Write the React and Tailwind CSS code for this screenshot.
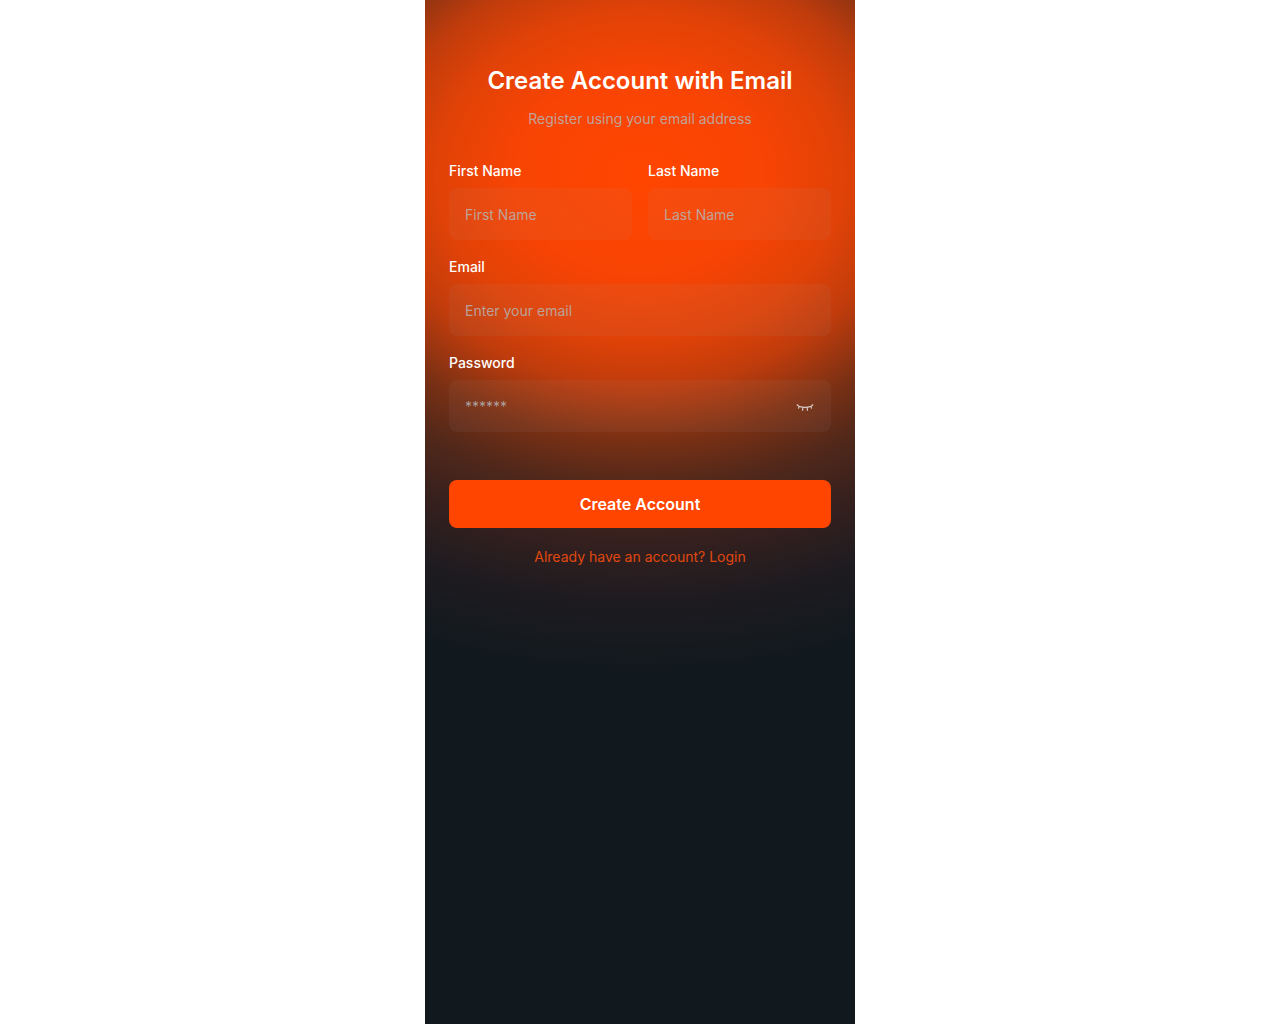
import React from 'react';

const Field = ({ label, placeholder }) => (
  <div className="flex flex-col gap-[7px]">
    <label className="text-sm leading-[20px] font-medium text-white">{label}</label>
    <input
      placeholder={placeholder}
      className="w-full h-[52px] px-4 rounded-lg bg-[#a7a7a7]/[0.07] text-sm text-white placeholder:text-[#b4b4b4]/85 outline-none"
    />
  </div>
);

const ClosedEye = () => (
  <svg width="18" height="10" viewBox="0 0 18 10" fill="none" stroke="#d8ccc6" strokeWidth="1.200">
    <path d="M.8 1.600L3 3.200C5 4.100 7 4.400 9 4.400s4-.3 6-1.200l2.200-1.600" />
    <path d="M3.200 3.200L2.400 5.600M14.800 3.200L15.600 5.600M6.900 4.200L6.500 7.800M11.100 4.200L11.500 7.800" />
  </svg>
);

export default function App() {
  return (
    <div className="min-h-screen bg-white flex justify-center font-['Inter',sans-serif]">
      <div className="w-[430px] min-h-[1024px] px-6 pt-[65px] bg-[#11191e] bg-[radial-gradient(ellipse_620px_500px_at_50%_175px,#ff4500_0%,#f84404_20%,#e04207_33%,#c03c0c_42%,#7a3014_53%,#52281a_62%,#36201e_73%,#1e1b20_85%,#11191e_100%)]">
        <h1 className="text-2xl leading-8 font-semibold text-white text-center">Create Account with Email</h1>
        <p className="mt-3 text-sm leading-5 text-[#b4b4b4]/85 text-center">Register using your email address</p>

        <form className="mt-8 flex flex-col gap-[17px]">
          <div className="grid grid-cols-2 gap-4">
            <Field label="First Name" placeholder="First Name" />
            <Field label="Last Name" placeholder="Last Name" />
          </div>
          <Field label="Email" placeholder="Enter your email" />
          <div className="flex flex-col gap-[7px]">
            <label className="text-sm leading-[20px] font-medium text-white">Password</label>
            <div className="relative">
              <input
                placeholder="******"
                className="w-full h-[52px] px-4 rounded-lg bg-[#a7a7a7]/[0.07] text-sm text-white placeholder:text-[#b4b4b4]/85 outline-none"
              />
              <span className="absolute right-[17px] top-[23px] flex">
                <ClosedEye />
              </span>
            </div>
          </div>
          <button type="button" className="mt-[31px] h-12 rounded-lg bg-[#ff4500] text-base font-semibold text-white">
            Create Account
          </button>
        </form>
        <p className="mt-[19px] text-sm leading-5 text-[#e0480f] text-center">Already have an account? Login</p>
      </div>
    </div>
  );
}
